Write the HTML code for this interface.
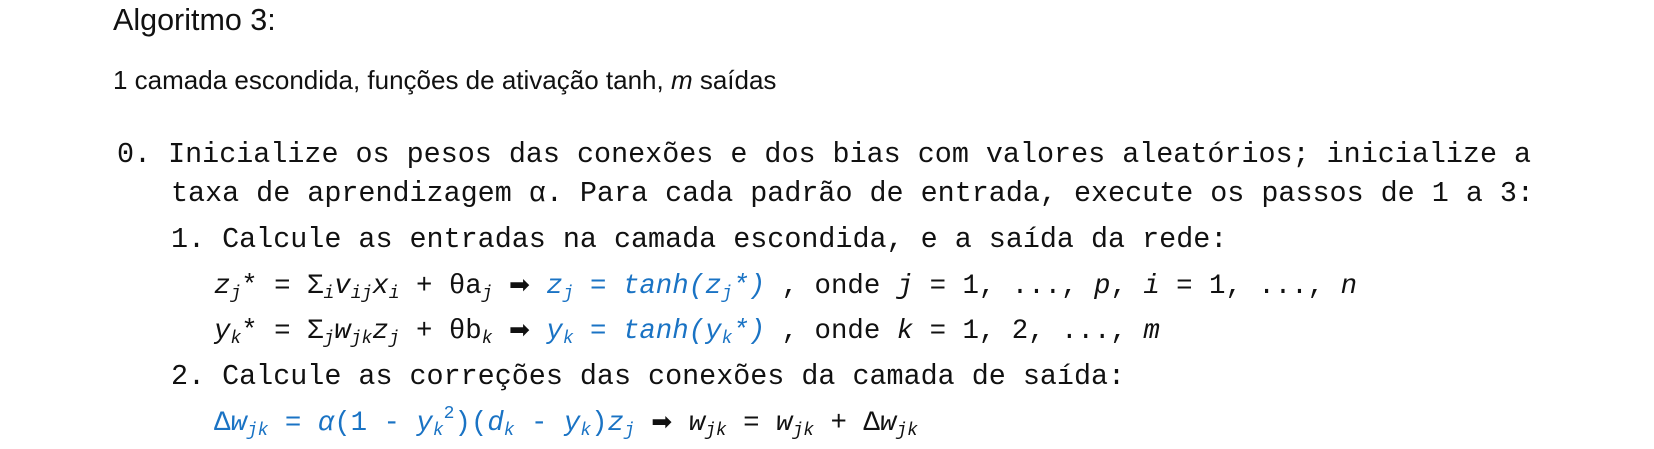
<!DOCTYPE html>
<html><head><meta charset="utf-8"><style>
body{margin:0;width:1654px;height:449px;background:#fff;overflow:hidden;position:relative;font-family:"Liberation Mono","DejaVu Sans Mono",monospace;color:#111}
.l{position:absolute;white-space:pre;font-size:28.4px;line-height:30px}
.f{font-size:27.4px}
.s{font-family:"Liberation Sans",sans-serif}
.b{color:#1a73c4}
i{font-style:italic}
sub{font-size:18px;vertical-align:-5px;line-height:0}
sup{font-size:18px;vertical-align:12px;line-height:0}
.ar{font-family:"DejaVu Sans",sans-serif;font-size:25px}
</style></head><body>
<div class="l s" style="left:113px;top:5px;font-size:30.5px;letter-spacing:0">Algoritmo 3:</div>
<div class="l s" style="left:113px;top:65px;font-size:26px;letter-spacing:0">1 camada escondida, funções de ativação tanh, <i>m</i> saídas</div>
<div class="l" style="left:117px;top:140px">0. Inicialize os pesos das conexões e dos bias com valores aleatórios; inicialize a</div>
<div class="l" style="left:171px;top:179px">taxa de aprendizagem α. Para cada padrão de entrada, execute os passos de 1 a 3:</div>
<div class="l" style="left:171px;top:225px">1. Calcule as entradas na camada escondida, e a saída da rede:</div>
<div class="l f" style="left:214px;top:270px"><i>z<sub>j</sub></i>* = Σ<sub><i>i</i></sub><i>v<sub>ij</sub>x<sub>i</sub></i> + θa<sub><i>j</i></sub> <span class="ar">➡</span> <span class="b"><i>z<sub>j</sub></i> = <i>tanh(z<sub>j</sub>*)</i></span> , onde <i>j</i> = 1, ..., <i>p</i>, <i>i</i> = 1, ..., <i>n</i></div>
<div class="l f" style="left:214px;top:315px"><i>y<sub>k</sub></i>* = Σ<sub><i>j</i></sub><i>w<sub>jk</sub>z<sub>j</sub></i> + θb<sub><i>k</i></sub> <span class="ar">➡</span> <span class="b"><i>y<sub>k</sub></i> = <i>tanh(y<sub>k</sub>*)</i></span> , onde <i>k</i> = 1, 2, ..., <i>m</i></div>
<div class="l" style="left:171px;top:362px">2. Calcule as correções das conexões da camada de saída:</div>
<div class="l f" style="left:214px;top:407px"><span class="b">Δ<i>w<sub>jk</sub></i> = <i>α</i>(1 - <i>y<sub>k</sub></i><sup>2</sup>)(<i>d<sub>k</sub></i> - <i>y<sub>k</sub></i>)<i>z<sub>j</sub></i></span> <span class="ar">➡</span> <i>w<sub>jk</sub></i> = <i>w<sub>jk</sub></i> + Δ<i>w<sub>jk</sub></i></div>
</body></html>
